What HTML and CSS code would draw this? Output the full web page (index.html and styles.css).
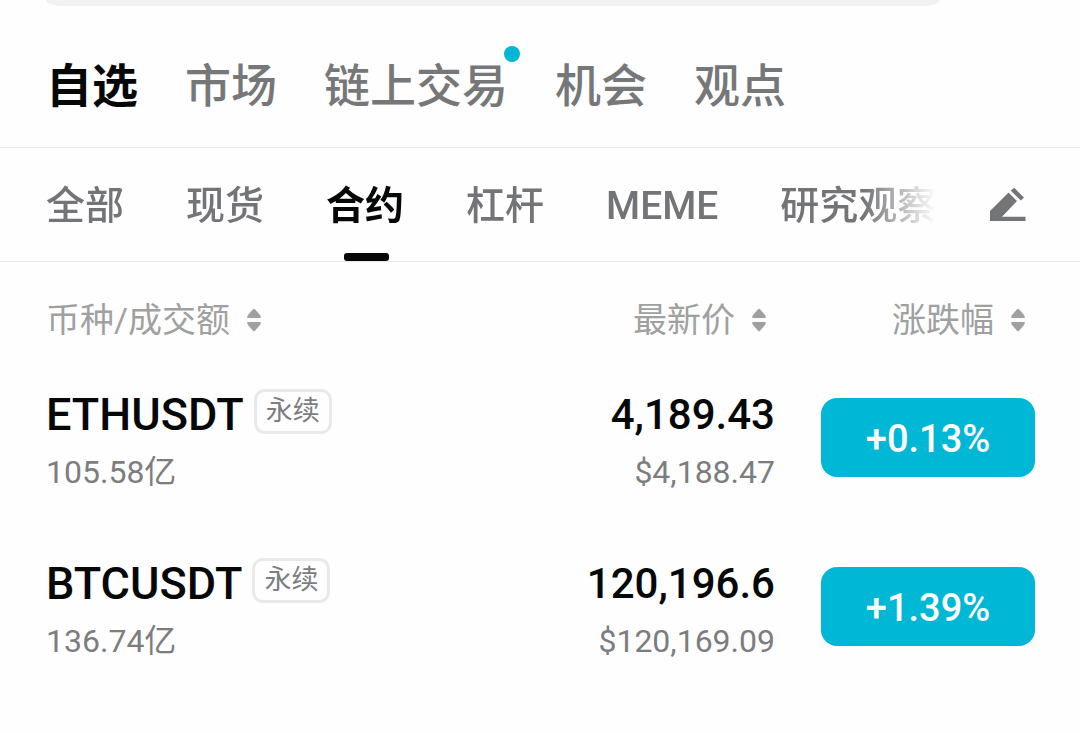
FILE: index.html
```html
<!DOCTYPE html>
<html lang="zh-CN">
<head>
<meta charset="utf-8">
<meta name="viewport" content="width=device-width, initial-scale=1">
<title>自选</title>
<link rel="stylesheet" href="styles.css">
</head>
<body>
<svg class="defs" aria-hidden="true">
  <symbol id="sort" viewBox="0 0 14 24">
    <path d="M6 1.3Q7 .3 8 1.3L13 7Q14 8.2 13.6 10H.4Q0 8.2 1 7Z"/>
    <path d="M6 22.7Q7 23.7 8 22.7L13 17Q14 15.8 13.6 14H.4Q0 15.8 1 17Z"/>
  </symbol>
</svg>
<div class="search-edge"></div>
<nav class="tabs">
  <a class="tab active" href="#fav">自选</a>
  <a class="tab" href="#market">市场</a>
  <a class="tab dot" href="#onchain">链上交易</a>
  <a class="tab" href="#chance">机会</a>
  <a class="tab" href="#views">观点</a>
</nav>
<div class="filters">
  <nav class="filter-list">
    <a class="filter" href="#all">全部</a>
    <a class="filter" href="#spot">现货</a>
    <a class="filter active" href="#futures">合约</a>
    <a class="filter" href="#margin">杠杆</a>
    <a class="filter" href="#meme">MEME</a>
    <a class="filter" href="#research">研究观察</a>
  </nav>
  <button class="edit" type="button" aria-label="编辑">
    <svg viewBox="0 0 36 34" width="36" height="34"><path d="M0 33V23L18.500 4.500L27 13L12 28.700H35.500V33ZM20.800 2.800L24 -.3L34 9.500L30.800 12.500Z"/></svg>
  </button>
</div>
<main>
  <table class="quotes">
    <thead>
      <tr>
        <th class="pair" scope="col"><button class="sort" type="button">币种/成交额<svg><use href="#sort"/></svg></button></th>
        <th class="price" scope="col"><button class="sort" type="button">最新价<svg><use href="#sort"/></svg></button></th>
        <th class="change" scope="col"><button class="sort" type="button">涨跌幅<svg><use href="#sort"/></svg></button></th>
      </tr>
    </thead>
    <tbody>
      <tr>
        <td class="pair"><div class="main-line"><span>ETHUSDT</span><span class="tag">永续</span></div><div class="sub-line">105.58亿</div></td>
        <td class="price"><div class="main-line">4,189.43</div><div class="sub-line">$4,188.47</div></td>
        <td class="change"><button class="rate" type="button">+0.13%</button></td>
      </tr>
      <tr>
        <td class="pair"><div class="main-line"><span>BTCUSDT</span><span class="tag">永续</span></div><div class="sub-line">136.74亿</div></td>
        <td class="price"><div class="main-line">120,196.6</div><div class="sub-line">$120,169.09</div></td>
        <td class="change"><button class="rate" type="button">+1.39%</button></td>
      </tr>
    </tbody>
  </table>
</main>
</body>
</html>
```
FILE: styles.css
```css
* { box-sizing: border-box; }
body {
  margin: 0;
  background: #fefefe;
  color: #050807;
  font-family: Roboto, "Noto Sans CJK SC", sans-serif;
}
a { color: inherit; text-decoration: none; }
button {
  padding: 0;
  border: 0;
  background: none;
  color: inherit;
  font: inherit;
}
.defs { position: absolute; width: 0; height: 0; }

.search-edge {
  height: 6px;
  margin: 0 140px 0 46px;
  border-radius: 0 0 16px 16px / 0 0 6px 6px;
  background: #f1f3f2;
}
.tabs {
  display: flex;
  gap: 46px;
  padding: 47px 46px 28px;
  border-bottom: 1px solid #e6e7e7;
  font-size: 46px;
  line-height: 66px;
  font-weight: 500;
  color: #757778;
  white-space: nowrap;
}
.tabs { gap: 47px; }
.tab { position: relative; }
.active { color: #050807; font-weight: 700; }
.dot::after {
  content: "";
  position: absolute;
  top: -7px;
  right: -12px;
  width: 16px;
  height: 16px;
  border-radius: 50%;
  background: #00b7d5;
}

.filters {
  display: flex;
  align-items: center;
  justify-content: space-between;
  padding: 0 54px 0 46px;
  border-bottom: 1px solid #e6e7e7;
  color: #727477;
}
.filter-list {
  display: flex;
  flex: 1;
  gap: 62px;
  margin-right: 54px;
  overflow: hidden;
  white-space: nowrap;
  font-size: 39px;
  line-height: 109px;
  font-weight: 500;
  -webkit-mask-image: linear-gradient(to left, transparent, #000 72px);
  mask-image: linear-gradient(to left, transparent, #000 72px);
}
.filter { position: relative; padding-top: 4px; }
.filter.active::after {
  content: "";
  position: absolute;
  bottom: 0;
  left: 50%;
  width: 45px;
  height: 8px;
  margin-left: -21px;
  border-radius: 3px;
  background: #050807;
}
.edit { display: flex; }
.edit svg { fill: #727477; overflow: visible; }

.quotes {
  width: 100%;
  border-collapse: collapse;
  table-layout: fixed;
}
th, td { padding: 0; font-weight: 400; }
th { height: 91px; padding-top: 24px; }
td { height: 169px; }
.pair { padding-left: 46px; text-align: left; }
.price { width: 300px; text-align: right; }
.change { width: 305px; padding-right: 45px; text-align: right; }
.sort {
  display: inline-flex;
  align-items: center;
  gap: 17px;
  color: #9fa1a1;
  font-size: 34px;
  line-height: 48px;
}
.price .sort { margin-right: 9px; }
.change .sort { margin-right: 10px; }
.sort svg { width: 14px; height: 24px; fill: #9fa1a1; }
.main-line {
  font-size: 42px;
  line-height: 69px;
  font-weight: 500;
}
.pair .main-line {
  display: flex;
  align-items: center;
  gap: 10px;
  font-size: 45px;
}
.sub-line {
  color: #7b7d7e;
  font-size: 32px;
  line-height: 47px;
}
.tag {
  margin-bottom: 5px;
  padding: 0 9px;
  border: 3px solid #e8eaea;
  border-radius: 11px;
  color: #7b7d7e;
  font-size: 27px;
  line-height: 39px;
  font-weight: 400;
}
.rate {
  width: 214px;
  padding-top: 4px;
  border-radius: 16px;
  background: #00b7d5;
  color: #fff;
  font-size: 38px;
  line-height: 75px;
  font-weight: 500;
  vertical-align: middle;
}
```
